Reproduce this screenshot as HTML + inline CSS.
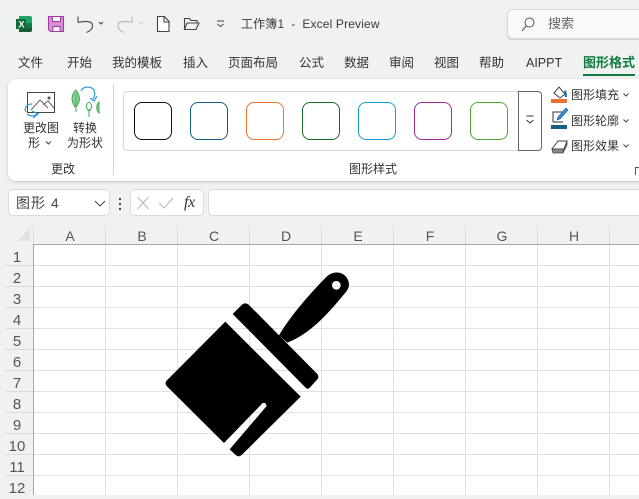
<!DOCTYPE html>
<html lang="zh"><head><meta charset="utf-8"><style>
html,body{margin:0;padding:0}
body{width:639px;height:495px;position:relative;overflow:hidden;background:#f0f1f1;font-family:"Liberation Sans","Noto Sans CJK SC",sans-serif;color:#333}
.t{position:absolute;white-space:nowrap;line-height:16px;font-size:12px}
.c{text-align:center;transform:translateX(-50%)}
svg{position:absolute;overflow:visible}
.box{position:absolute;top:102px;width:36px;height:36px;border:1px solid;border-radius:8px;background:#fff;box-sizing:content-box}
.hd{position:absolute;top:227px;font-size:14px;line-height:18px;color:#555;transform:translateX(-50%)}
.rn{position:absolute;left:0;width:34px;text-align:center;font-size:15px;line-height:20px;color:#555}
</style></head><body>

<!-- title bar icons -->
<svg style="left:0;top:0" width="260" height="40" viewBox="0 0 260 40">
<path d="M19 16h11a2 2 0 0 1 2 2v5h-13z" fill="#21a366"/><path d="M19 23h13v5.500h-13z" fill="#107c41"/><path d="M19 28h13v2a2 2 0 0 1-2 2h-11z" fill="#185c37"/>
<rect x="16" y="19" width="10" height="10" fill="#0f6b3a"/>
<text x="18.500" y="27.500" font-size="9" font-weight="700" fill="#fff" font-family="Liberation Sans">X</text>
<path d="M48.500 16.500h15v15h-13l-2-2z" fill="#d58fd6" stroke="#a23aa8" stroke-width="1.100"/>
<rect x="52.500" y="16.500" width="8" height="5" fill="#fff" stroke="#a23aa8"/><rect x="53" y="26.500" width="7" height="5" fill="#fff" stroke="#a23aa8"/>
<path d="M78 22.500l5.500-1h3c4 0 6 1.800 6 4.500 0 3-2.500 5-6 6.500M78 22.500V16.500" fill="none" stroke="#555" stroke-width="1.200"/>
<path d="M99 22l2 2 2-2" fill="none" stroke="#444" stroke-width="1.100"/>
<path d="M132 22.500l-5-1h-3c-4 0-6 1.800-6 4.500 0 3 2.500 5 6 6.500M132 22.500V16.500" fill="none" stroke="#bbb" stroke-width="1.200"/>
<path d="M139 22l2 2 2-2" fill="none" stroke="#ccc" stroke-width="1.100"/>
<path d="M157.500 16.500h7l4.500 5v10h-11.500zM164 16.500v5.500h5" fill="#fff" stroke="#444" stroke-width="1.100"/>
<path d="M184.500 29.500v-11h5l1.500 2h6v2.500M184.500 29.500l2.500-6.500h12l-3 6.500z" fill="none" stroke="#444" stroke-width="1.100"/>
<path d="M217 21h7M217.500 24l3 2.500 3-2.500" fill="none" stroke="#444" stroke-width="1"/>
</svg>
<div class="t" style="left:241px;top:16px;font-size:12px;color:#3a3a3a;letter-spacing:.15px">工作簿1 &nbsp;-&nbsp; Excel Preview</div>

<!-- search -->
<div style="position:absolute;left:507px;top:9px;width:140px;height:30px;background:#f8f9f9;border:1px solid #d8d8d8;border-radius:5px;box-sizing:border-box;box-shadow:0 1px 1px #ccc"></div>
<svg style="left:520px;top:16px" width="16" height="16" viewBox="0 0 16 16"><circle cx="9.500" cy="6.500" r="4.500" fill="none" stroke="#555" stroke-width="1"/><path d="M6.200 10L2 15" stroke="#555" stroke-width="1"/></svg>
<div class="t" style="left:548px;top:16px;font-size:13px;color:#666">搜索</div>

<!-- tabs -->
<div class="t" style="left:18px;top:55px;font-size:12.500px">文件</div>
<div class="t" style="left:67px;top:55px;font-size:12.500px">开始</div>
<div class="t" style="left:112px;top:55px;font-size:12.500px">我的模板</div>
<div class="t" style="left:183px;top:55px;font-size:12.500px">插入</div>
<div class="t" style="left:228px;top:55px;font-size:12.500px">页面布局</div>
<div class="t" style="left:299px;top:55px;font-size:12.500px">公式</div>
<div class="t" style="left:344px;top:55px;font-size:12.500px">数据</div>
<div class="t" style="left:389px;top:55px;font-size:12.500px">审阅</div>
<div class="t" style="left:434px;top:55px;font-size:12.500px">视图</div>
<div class="t" style="left:479px;top:55px;font-size:12.500px">帮助</div>
<div class="t" style="left:526px;top:55px;font-size:12.500px">AIPPT</div>
<div class="t" style="left:583px;top:55px;font-size:13px;font-weight:700;color:#107c41">图形格式</div>
<div style="position:absolute;left:583px;top:74px;width:52px;height:2px;background:#107c41"></div>

<!-- ribbon -->
<div style="position:absolute;left:8px;top:79px;width:650px;height:102px;background:#fff;border-radius:8px;box-shadow:0 1px 3px #c4c4c4"></div>

<svg style="left:20px;top:85px" width="90" height="42" viewBox="0 0 90 42">
<rect x="7.500" y="7.500" width="27" height="20" fill="#fff" stroke="#444" stroke-width="1"/>
<path d="M11 25l9-10 8 8M23 20l5-4 6 7" fill="none" stroke="#666" stroke-width="1"/><circle cx="29" cy="13" r="1.500" fill="#555"/>
<path d="M6 27c-2-3 0-8 6-8M18 28c-2 3-7 4-11 1M12 26l6 3-5 4" fill="none" stroke="#2f9be0" stroke-width="1.200"/>
<path d="M56 5c-4 4-6 10-1 17 1 0 1 0 1 0 5-6 4-12 0-17z" fill="#8ed09c" stroke="#3ea85a" stroke-width="1"/><path d="M56 8v19" stroke="#3ea85a"/>
<path d="M69 17c-3 2-4 6 0 9 4-3 3-7 0-9zM69 24v8" fill="#fff" stroke="#3ea85a"/>
<path d="M79 17c-3 3-3 8 0 11z" fill="#8ed09c" stroke="#3ea85a"/>
<path d="M61 6c2-5 10-5 13-1 1 3 1 6-1 9M70 13l4 3 3-5" fill="none" stroke="#2f9be0" stroke-width="1.200"/>
</svg>
<div class="t c" style="left:41px;top:120px">更改图</div>
<div class="t" style="left:28px;top:135px">形</div>
<svg style="left:45px;top:140px" width="8" height="6"><path d="M1 1.500l2.500 2.500 2.500-2.500" fill="none" stroke="#444"/></svg>
<div class="t c" style="left:85px;top:120px">转换</div>
<div class="t c" style="left:85px;top:135px">为形状</div>
<div class="t c" style="left:63px;top:161px">更改</div>
<div style="position:absolute;left:113px;top:84px;width:1px;height:91px;background:#d4d4d4"></div>

<!-- styles gallery -->
<div style="position:absolute;left:123px;top:91px;width:396px;height:60px;border:1px solid #d8d8d8;border-radius:4px 0 0 4px;box-sizing:border-box"></div>
<div style="position:absolute;left:518px;top:91px;width:24px;height:60px;border:1px solid #666;border-radius:0 4px 4px 0;box-sizing:border-box;background:#fff"></div>
<svg style="left:525px;top:114px" width="10" height="12" viewBox="0 0 10 12"><path d="M1.500 2h7M1.500 6l3.500 3 3.500-3" fill="none" stroke="#333" stroke-width="1"/></svg>
<div class="box" style="left:134px;border-color:#111"></div>
<div class="box" style="left:190px;border-color:#156082"></div>
<div class="box" style="left:246px;border-color:#e97132"></div>
<div class="box" style="left:302px;border-color:#196b24"></div>
<div class="box" style="left:358px;border-color:#0f9ed5"></div>
<div class="box" style="left:414px;border-color:#a02b93"></div>
<div class="box" style="left:470px;border-color:#4ea72e"></div>
<div class="t c" style="left:373px;top:161px">图形样式</div>

<!-- shape format buttons -->
<svg style="left:550px;top:85px" width="30" height="72" viewBox="0 0 30 72">
<path d="M4 8l5-6 6 7-5 4z" fill="#fff" stroke="#444"/><path d="M14 6c2-2 3 1 3 6h-2z" fill="#1f78b4"/>
<rect x="1" y="14" width="16" height="4" fill="#e97132"/>
<path d="M3 37V27h10M13 37H3" fill="none" stroke="#333"/><path d="M7 35l1-3 8-9 2 2-8 9z" fill="#3a8fd6" stroke="#1f5f99" stroke-width=".7"/>
<rect x="1" y="40" width="16" height="4" fill="#156082"/>
<path d="M2 64l6-8h9l-3 8z" fill="#fff" stroke="#444"/><path d="M2 64l1 4h10l1-4zM14 64l3-8v4l-4 8z" fill="#888" stroke="#444" stroke-width=".8"/>
</svg>
<div class="t" style="left:571px;top:87px">图形填充</div>
<div class="t" style="left:571px;top:113px">图形轮廓</div>
<div class="t" style="left:571px;top:138px">图形效果</div>
<svg style="left:622px;top:90px" width="10" height="60" viewBox="0 0 10 60"><path d="M1.500 3.500l2.500 2.500 2.500-2.500M1.500 29.500l2.500 2.500 2.500-2.500M1.500 54.500l2.500 2.500 2.500-2.500" fill="none" stroke="#444" stroke-width="1"/></svg>
<svg style="left:635px;top:167px" width="4" height="8"><path d="M.500 8V.500H4" fill="none" stroke="#555"/></svg>

<!-- formula bar -->
<div style="position:absolute;left:8px;top:189px;width:102px;height:27px;background:#fff;border:1px solid #dcdcdc;border-radius:5px;box-sizing:border-box"></div>
<div class="t" style="left:16px;top:195px;font-size:14px;letter-spacing:1px;color:#444">图形 4</div>
<svg style="left:93px;top:198px" width="14" height="10"><path d="M2 3l5 5 5-5" fill="none" stroke="#444" stroke-width="1.100"/></svg>
<svg style="left:118px;top:197px" width="4" height="14"><circle cx="2" cy="2" r="1.100" fill="#333"/><circle cx="2" cy="7" r="1.100" fill="#333"/><circle cx="2" cy="12" r="1.100" fill="#333"/></svg>
<div style="position:absolute;left:130px;top:189px;width:74px;height:27px;background:#fff;border:1px solid #dcdcdc;border-radius:5px;box-sizing:border-box"></div>
<svg style="left:136px;top:196px" width="42" height="14"><path d="M1.500 1l11 12M12.500 1l-11 12M23 7l5 5 9-10" fill="none" stroke="#b8b8b8" stroke-width="1.100"/></svg>
<div style="position:absolute;left:184px;top:194px;font:italic 400 16px/18px 'Liberation Serif',serif;color:#333;letter-spacing:-.3px">fx</div>
<div style="position:absolute;left:208px;top:189px;width:445px;height:27px;background:#fff;border:1px solid #dcdcdc;border-radius:5px;box-sizing:border-box"></div>

<!-- grid -->
<div style="position:absolute;left:33px;top:245px;width:606px;height:250px;background:#fff"></div>
<svg style="left:0;top:0" width="639" height="495" viewBox="0 0 639 495" shape-rendering="crispEdges">
<path d="M17 241l13-13v13z" fill="#e2e2e2"/>
<g stroke="#e0e0e0" fill="none">
<path d="M105.500 245V495M177.500 245V495M249.500 245V495M321.500 245V495M393.500 245V495M465.500 245V495M537.500 245V495M609.500 245V495"/>
<path d="M33 265.500H639M33 286.500H639M33 307.500H639M33 328.500H639M33 349.500H639M33 370.500H639M33 391.500H639M33 412.500H639M33 433.500H639M33 454.500H639M33 475.500H639"/>
</g>
<g stroke="#dcdcdc" fill="none">
<path d="M33.500 226V244M105.500 226V244M177.500 226V244M249.500 226V244M321.500 226V244M393.500 226V244M465.500 226V244M537.500 226V244M609.500 226V244"/>
<path d="M5 265.500H33M5 286.500H33M5 307.500H33M5 328.500H33M5 349.500H33M5 370.500H33M5 391.500H33M5 412.500H33M5 433.500H33M5 454.500H33M5 475.500H33"/>
</g>
<path d="M33 244.500H639M33.500 244V495" stroke="#a8a8a8" fill="none"/>
</svg>
<div class="hd" style="left:70px">A</div><div class="hd" style="left:142px">B</div><div class="hd" style="left:214px">C</div><div class="hd" style="left:286px">D</div><div class="hd" style="left:358px">E</div><div class="hd" style="left:430px">F</div><div class="hd" style="left:502px">G</div><div class="hd" style="left:574px">H</div>
<div class="rn" style="top:248px">1</div><div class="rn" style="top:269px">2</div><div class="rn" style="top:290px">3</div><div class="rn" style="top:311px">4</div><div class="rn" style="top:332px">5</div><div class="rn" style="top:353px">6</div><div class="rn" style="top:374px">7</div><div class="rn" style="top:395px">8</div><div class="rn" style="top:416px">9</div><div class="rn" style="top:437px">10</div><div class="rn" style="top:458px">11</div><div class="rn" style="top:479px">12</div>

<!-- brush -->
<svg style="left:150px;top:260px" width="210" height="210" viewBox="0 0 630 630">
<path fill="#000" fill-rule="evenodd" d="M387 226C420 170 480 100 530 50C555 28 585 38 594 60C602 80 592 92 580 105C535 160 480 222 412 248ZM559 63a13 13 0 1 0 .01 0Z"/>
<path fill="#000" d="M248 162L277 133Q286 127 295 133L502 342Q508 350 502 358L480 382Q473 390 466 382Z"/>
<path fill="#000" d="M226 185L452 410L276 584Q266 594 256 584L239 568L350 438L346 429L338 429L222 549L50 378Q43 370 50 362Z"/>
</svg>
</body></html>
